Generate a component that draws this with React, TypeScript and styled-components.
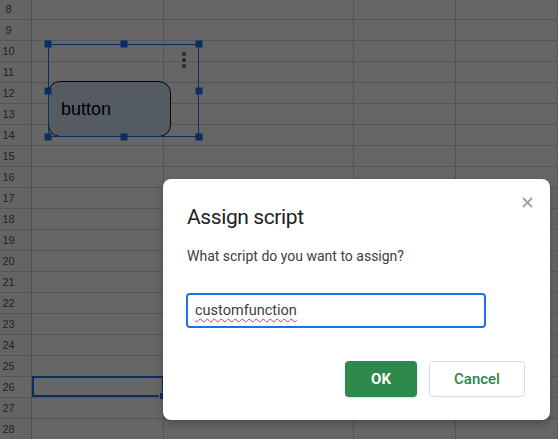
import React from "react";
import styled, { createGlobalStyle } from "styled-components";

const GlobalStyle = createGlobalStyle`
  html, body {
    margin: 0;
    padding: 0;
    background: #fff;
    overflow: hidden;
  }
  body {
    font-family: Roboto, "Liberation Sans", Arial, sans-serif;
  }
`;

const Page = styled.div`
  position: relative;
  width: 558px;
  height: 439px;
  overflow: hidden;
`;

const Sheet = styled.div`
  display: flex;
  flex-direction: column;
  margin-top: -1px;
`;

const Row = styled.div`
  display: flex;
  height: 21px;
  flex: none;
`;

const RowHeader = styled.div<{ $active?: boolean }>`
  box-sizing: border-box;
  width: 32px;
  flex: none;
  padding-right: 14px;
  background: ${(p) => (p.$active ? "#ffffff" : "#f8f9fa")};
  border-right: 1px solid #c4c7c5;
  border-bottom: 1px solid #d5d5d5;
  font-family: "Liberation Sans", Arial, sans-serif;
  font-size: 11px;
  line-height: 20px;
  color: #5a5a5a;
  text-align: center;
`;

const Cell = styled.div<{ $width?: number; $selected?: boolean }>`
  position: relative;
  box-sizing: border-box;
  width: ${(p) => (p.$width ? `${p.$width}px` : "auto")};
  flex: ${(p) => (p.$width ? "none" : "1")};
  border-right: 1px solid #d5d5d5;
  border-bottom: 1px solid #d5d5d5;

  ${(p) =>
    p.$selected &&
    `
    &::after {
      content: "";
      position: absolute;
      top: -1px;
      left: 0;
      right: -1px;
      bottom: 0;
      border: 2px solid #1a73e8;
    }
  `}
`;

const FillHandle = styled.div`
  position: absolute;
  right: -4px;
  bottom: -3px;
  width: 6px;
  height: 6px;
  background: #1a73e8;
  border: 1px solid #fff;
  z-index: 1;
`;

const Drawing = styled.div`
  position: absolute;
  left: 48px;
  top: 44px;
  width: 151px;
  height: 93px;
  z-index: 1;

  &::before {
    content: "";
    position: absolute;
    inset: 0;
    border: 1px solid #1a73e8;
    z-index: 1;
  }
`;

const ShapeButton = styled.div`
  position: absolute;
  left: 0;
  top: 37px;
  box-sizing: border-box;
  width: 123px;
  height: 56px;
  display: flex;
  align-items: center;
  padding-left: 12px;
  background: #d3e3f4;
  border: 1px solid #111;
  border-radius: 12px;
  font-family: "Liberation Sans", Arial, sans-serif;
  font-size: 18px;
  color: #000;
`;

const Handle = styled.div<{ $x: number; $y: number }>`
  position: absolute;
  left: ${(p) => p.$x}%;
  top: ${(p) => p.$y}%;
  width: 7px;
  height: 7px;
  transform: translate(-50%, -50%);
  background: #1a73e8;
  z-index: 2;
`;

const MoreDots = styled.div`
  position: absolute;
  left: 134px;
  top: 8px;
  display: flex;
  flex-direction: column;
  gap: 2px;

  span {
    width: 4px;
    height: 4px;
    border-radius: 50%;
    background: #5f6368;
  }
`;

const Scrim = styled.div`
  position: absolute;
  inset: 0;
  z-index: 10;
  background: rgba(0, 0, 0, 0.6);
`;

const Dialog = styled.div`
  position: absolute;
  z-index: 11;
  left: 163px;
  top: 179px;
  width: 387px;
  box-sizing: border-box;
  padding: 22px 24px 23px 24px;
  background: #fff;
  border-radius: 8px;
  box-shadow: 0 4px 8px rgba(0, 0, 0, 0.25);
  display: flex;
  flex-direction: column;
`;

const DialogHeader = styled.div`
  display: flex;
  align-items: flex-start;
  justify-content: space-between;
`;

const Title = styled.h2`
  margin: 0;
  font-family: Roboto, "Open Sans", sans-serif;
  font-weight: 400;
  font-size: 21px;
  letter-spacing: -0.4px;
  line-height: 32px;
  color: #202124;
`;

const CloseButton = styled.button`
  margin: -7px -9px 0 0;
  width: 16px;
  height: 16px;
  padding: 0;
  border: none;
  background: none;
  display: flex;
  align-items: center;
  justify-content: center;
  color: #a0a4a8;
  cursor: pointer;
`;

const Prompt = styled.p`
  margin: 13px 0 0 0;
  font-size: 14px;
  line-height: 20px;
  color: #3c4043;
`;

const TextInput = styled.div`
  box-sizing: border-box;
  margin: 27px 0 0 -1px;
  width: 300px;
  height: 35px;
  padding: 0 7px;
  display: flex;
  align-items: center;
  border: 2px solid #1a73e8;
  border-radius: 4px;
  font-size: 14.5px;
  color: #3c4043;

  span {
    text-decoration: underline wavy #e53935;
    text-decoration-thickness: 1px;
    text-underline-offset: 3px;
    text-decoration-skip-ink: none;
  }
`;

const Actions = styled.div`
  margin-top: 33px;
  display: flex;
  justify-content: flex-end;
  gap: 12px;
  margin-right: 1px;
`;

const ActionButton = styled.button<{ $primary?: boolean }>`
  box-sizing: border-box;
  height: 36px;
  min-width: ${(p) => (p.$primary ? "72px" : "96px")};
  padding: 0 16px;
  border-radius: 4px;
  font-family: Roboto, sans-serif;
  font-size: 15px;
  font-weight: ${(p) => (p.$primary ? 700 : 500)};
  cursor: pointer;
  background: ${(p) => (p.$primary ? "#2d8a4c" : "#fff")};
  color: ${(p) => (p.$primary ? "#fff" : "#2a8746")};
  border: ${(p) => (p.$primary ? "none" : "1px solid #dadce0")};
  box-shadow: ${(p) =>
    p.$primary ? "0 1px 2px rgba(60, 64, 67, 0.2)" : "none"};
`;

const columns = [132, 190, 102, 0];
const rows = Array.from({ length: 21 }, (_, i) => i + 8);

const App: React.FunctionComponent = () => {
  return (
    <Page>
      <GlobalStyle />
      <Sheet>
        {rows.map((n) => (
          <Row key={n}>
            <RowHeader $active={n === 26}>{n}</RowHeader>
            {columns.map((w, i) => (
              <Cell key={i} $width={w} $selected={n === 26 && i === 0}>
                {n === 26 && i === 0 && <FillHandle />}
              </Cell>
            ))}
          </Row>
        ))}
      </Sheet>

      <Drawing>
        <ShapeButton>button</ShapeButton>
        <MoreDots>
          <span />
          <span />
          <span />
        </MoreDots>
        <Handle $x={0} $y={0} />
        <Handle $x={50} $y={0} />
        <Handle $x={100} $y={0} />
        <Handle $x={0} $y={50} />
        <Handle $x={100} $y={50} />
        <Handle $x={0} $y={100} />
        <Handle $x={50} $y={100} />
        <Handle $x={100} $y={100} />
      </Drawing>

      <Scrim />

      <Dialog>
        <DialogHeader>
          <Title>Assign script</Title>
          <CloseButton aria-label="Close">
            <svg width="11" height="11" viewBox="0 0 11 11">
              <path
                d="M1 1L10 10M10 1L1 10"
                stroke="currentColor"
                strokeWidth="2"
              />
            </svg>
          </CloseButton>
        </DialogHeader>
        <Prompt>What script do you want to assign?</Prompt>
        <TextInput>
          <span>customfunction</span>
        </TextInput>
        <Actions>
          <ActionButton $primary>OK</ActionButton>
          <ActionButton>Cancel</ActionButton>
        </Actions>
      </Dialog>
    </Page>
  );
};

export default App;
